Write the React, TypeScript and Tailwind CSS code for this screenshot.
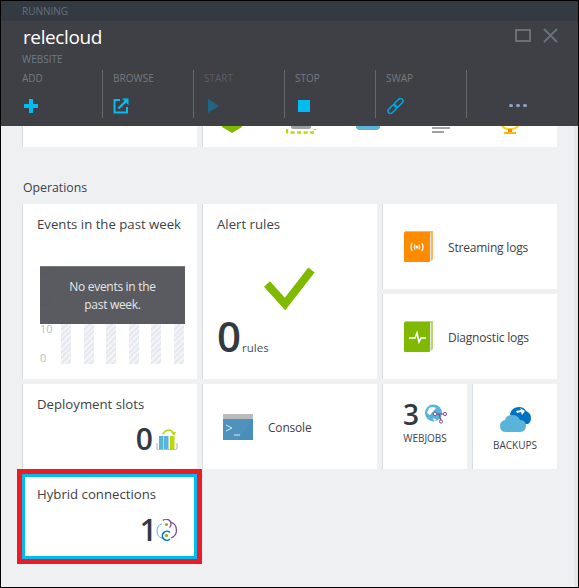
const font = "font-['Open_Sans',sans-serif]";

function Command({ label, dim, first, last, children }: { label?: string; dim?: boolean; first?: boolean; last?: boolean; children: React.ReactNode }) {
  return (
    <div className={`flex h-[48px] flex-col ${first ? "w-[81px]" : "w-[91px] pl-[10px]"} ${last ? "" : "border-r border-[#66686c]"}`}>
      <div className={`h-[26px] text-[10px] leading-[16px] ${dim ? "text-[#5b5c60]" : "text-[#77797d]"}`}>{label}</div>
      <div className="flex h-[20px] items-center">{children}</div>
    </div>
  );
}

function BookIcon({ color, light, children }: { color: string; light: string; children: React.ReactNode }) {
  return (
    <svg width="29" height="31" viewBox="0 0 29 31" className="shrink-0">
      <path d="M1 0h28v28l-2 2V2H1z" fill={light} />
      <path d="M26 2h1v28h-1z" fill="#e8e8e8" />
      <rect x="0" y="1" width="26" height="30" rx="1" fill={color} />
      {children}
    </svg>
  );
}

function Title({ children }: { children: React.ReactNode }) {
  return <div className="whitespace-nowrap text-[13.2px] leading-[20px] text-[#3d4148]">{children}</div>;
}

function Label({ children }: { children: React.ReactNode }) {
  return <span className="pt-[3px] text-[12px] tracking-[-0.2px] text-[#3d4148]">{children}</span>;
}

function Card({ className = "", children }: { className?: string; children?: React.ReactNode }) {
  return <div className={`border-l border-[#d9dce0] bg-white ${className}`}>{children}</div>;
}

function Chart() {
  const bars = [0, 1, 2, 3, 4, 5];
  return (
    <div className="relative mt-[30px] h-[102px] w-[148px] text-[11px] text-[#b9bcc0]">
      <div className="flex h-full">
        <div className="flex w-[24px] flex-col justify-between pl-[3px] leading-[16px]">
          <span>30</span>
          <span>20</span>
          <span>10</span>
          <span>0</span>
        </div>
        <div className="flex flex-1 items-end justify-between pb-[2px] pr-[1px]">
          {bars.map((b) => (
            <div
              key={b}
              className="h-[58px] w-[10px] bg-[repeating-linear-gradient(135deg,#e7e9f0_0px,#e7e9f0_2px,#f3f4f7_2px,#f3f4f7_4px)]"
            />
          ))}
        </div>
      </div>
      <div className="absolute left-[3px] top-[2px] flex h-[58px] w-[145px] items-center justify-center border-t border-[#77797d] bg-[#505257]/95 text-center text-[12px] leading-[18px] tracking-[-0.3px] text-[#e6e6e6]">
        <span>
          No events in the
          <br />
          past week.
        </span>
      </div>
    </div>
  );
}

export default function App() {
  return (
    <div className={`flex h-[588px] w-[579px] flex-col overflow-hidden border border-black bg-[#eff0f2] ${font}`}>
      <div className="h-[20px] bg-[#333a42] pl-[21px] text-[10px] leading-[20px] text-[#66707b]">RUNNING</div>
      <div className="h-[105px] bg-[#3f4045] pl-[21px] pr-[20px]">
        <div className="flex h-[49px] justify-between">
          <div>
            <div className="pl-[1px] pt-[3px] text-[19px] leading-[27px] tracking-[-0.4px] text-white">relecloud</div>
            <div className="text-[10px] leading-[16px] text-[#6f7a88]">WEBSITE</div>
          </div>
          <div className="flex items-start gap-[12px] pt-[7px]">
            <svg width="16" height="14" viewBox="0 0 16 14" className="mt-[1px]">
              <rect x="1" y="1" width="14" height="11" fill="none" stroke="#6a7077" strokeWidth="2" />
            </svg>
            <svg width="15" height="15" viewBox="0 0 15 15">
              <path d="M1 1l13 13M14 1L1 14" fill="none" stroke="#6a7077" strokeWidth="2" />
            </svg>
          </div>
        </div>
        <div className="flex">
          <Command label="ADD" first>
            <svg width="16" height="16" viewBox="0 0 16 16" className="ml-[1px]">
              <path d="M8 1v14M1 8h14" fill="none" stroke="#00bcf2" strokeWidth="4" />
            </svg>
          </Command>
          <Command label="BROWSE">
            <svg width="16" height="16" viewBox="0 0 16 16">
              <path d="M7 2H1.500v12.500H14V9" fill="none" stroke="#00bcf2" strokeWidth="2" />
              <path d="M5.500 10.500L13 3" fill="none" stroke="#00bcf2" strokeWidth="2.400" />
              <path d="M9 0.500h6.500V7z" fill="#00bcf2" />
            </svg>
          </Command>
          <Command label="START" dim>
            <svg width="12" height="14" viewBox="0 0 12 14" className="ml-[4px]">
              <path d="M0 0l11 7-11 7z" fill="#1f6685" />
            </svg>
          </Command>
          <Command label="STOP">
            <div className="ml-[3px] h-[12px] w-[12px] bg-[#00bcf2]" />
          </Command>
          <Command label="SWAP">
            <svg width="17" height="16" viewBox="0 0 17 16" className="ml-[1px]">
              <g fill="none" stroke="#00a8e0" strokeWidth="1.500" transform="rotate(-45 8.500 8)">
                <rect x="-1" y="5.500" width="10" height="5" rx="2.500" />
                <rect x="8" y="5.500" width="10" height="5" rx="2.500" />
              </g>
            </svg>
          </Command>
          <Command last>
            <div className="ml-[32px] flex gap-[3px] pb-[1px]">
              <div className="h-[3px] w-[4px] rounded-full bg-[#8aa4c8]" />
              <div className="h-[3px] w-[4px] rounded-full bg-[#8aa4c8]" />
              <div className="h-[3px] w-[4px] rounded-full bg-[#8aa4c8]" />
            </div>
          </Command>
        </div>
      </div>

      <div className="flex flex-1">
        <div className="flex-1 pl-[21px]">
          <div className="flex h-[21px] gap-[5px]">
            <Card className="w-[175px]" />
            <Card className="flex w-[355px] items-start overflow-hidden">
              <svg width="20" height="7" viewBox="0 0 20 7" className="ml-[19px] shrink-0">
                <path d="M0 0h20v1L10 7 0 1z" fill="#7fba00" />
              </svg>
              <svg width="30" height="8" viewBox="0 0 30 8" className="ml-[44px] shrink-0">
                <path d="M5 0h20v1q0 2-2 2H7q-2 0-2-2z" fill="#a0a1a2" />
                <path d="M1 3v2.500q0 1 1 1h26q1 0 1-1V3" fill="none" stroke="#bad80a" strokeWidth="2.500" strokeDasharray="4 2.500" />
              </svg>
              <div className="ml-[40px] h-[4px] w-[24px] shrink-0 rounded-b-[4px] bg-[#59b4d9]" />
              <svg width="19" height="7" viewBox="0 0 19 7" className="ml-[52px] shrink-0">
                <path d="M0 2h18M0 6h12" fill="none" stroke="#444" strokeWidth="1.200" />
              </svg>
              <svg width="18" height="8" viewBox="0 0 18 8" className="ml-[50px] shrink-0">
                <path d="M1 0q2 3 7 3h2q5 0 7-3" fill="none" stroke="#fcd116" strokeWidth="2" />
                <rect x="7" y="3" width="4" height="3" fill="#ff8c00" />
                <rect x="3" y="6" width="12" height="2" fill="#fcb714" />
              </svg>
            </Card>
          </div>

          <div className="flex h-[57px] items-center pl-[1px] pt-[24px] text-[12.3px] leading-[18px] text-[#3d4148]">Operations</div>

          <div className="grid grid-cols-[175px_175px_175px] grid-rows-[85px_85px_85px_85px] gap-[5px]">
            <Card className="row-span-2 px-[14px] pt-[10px]">
              <Title>Events in the past week</Title>
              <Chart />
            </Card>
            <Card className="row-span-2 flex flex-col px-[14px] pt-[10px]">
              <Title>Alert rules</Title>
              <svg width="52" height="46" viewBox="0 0 52 46" className="ml-[47px] mt-[33px] shrink-0">
                <path d="M3 17l18 20L47.500 3" fill="none" stroke="#7fba00" strokeWidth="8" />
              </svg>
              <div className="mt-[-3px] flex items-end">
                <span className="text-[42px] font-semibold leading-[52px] text-[#333a42]">0</span>
                <span className="pb-[5px] pl-[1px] text-[11.500px] leading-[18px] text-[#4a4f58]">rules</span>
              </div>
            </Card>
            <Card className="flex items-center gap-[15px] pl-[21px]">
              <BookIcon color="#ff8c00" light="#ffb45c">
                <path d="M8 12q-2 4 0 8M11 13.500q-1.500 2.500 0 5M18 12q2 4 0 8M15 13.500q1.500 2.500 0 5" fill="none" stroke="#fff" strokeWidth="1.200" />
                <circle cx="13" cy="16" r="1.500" fill="#fff" />
              </BookIcon>
              <Label>Streaming logs</Label>
            </Card>
            <Card className="col-start-3 flex items-center gap-[15px] pl-[21px]">
              <BookIcon color="#7fba00" light="#b4d96a">
                <path d="M5 17h6l2-5 2 9 2-4h5" fill="none" stroke="#fff" strokeWidth="1.600" />
              </BookIcon>
              <Label>Diagnostic logs</Label>
            </Card>
            <Card className="px-[14px] pt-[10px]">
              <Title>Deployment slots</Title>
              <div className="mt-[5px] flex items-center justify-end gap-[3px] pr-[5px]">
                <span className="text-[30px] font-semibold leading-[40px] text-[#333a42]">0</span>
                <svg width="22" height="23" viewBox="0 0 22 23" className="shrink-0">
                  <path d="M6.500 6Q12 -1 17 4" fill="none" stroke="#bad80a" strokeWidth="1.500" />
                  <path d="M15 4h5l-2 4z" fill="#bad80a" />
                  <rect x="3" y="8" width="4.500" height="13" fill="#59b4d9" />
                  <rect x="8" y="8" width="4.500" height="13" fill="#59b4d9" />
                  <rect x="14" y="8" width="4.500" height="13" fill="#bad80a" />
                  <path d="M1 15v5q0 1.500 1.500 1.500h17q1.500 0 1.500-1.500v-5" fill="none" stroke="#b8bbbe" strokeWidth="1.200" />
                </svg>
              </div>
            </Card>
            <Card className="flex items-center gap-[15px] pl-[20px]">
              <svg width="30" height="26" viewBox="0 0 30 26" className="shrink-0">
                <rect width="30" height="26" fill="#4a8fba" />
                <path d="M0 0h30v5H0z" fill="#b8babc" />
                <path d="M30 5v0L14 26H0V5z" fill="#4f93bd" />
                <path d="M3 11l6 3-6 3" fill="none" stroke="#dbe9f2" strokeWidth="1" />
                <path d="M11 21h6" stroke="#dbe9f2" strokeWidth="1" />
              </svg>
              <Label>Console</Label>
            </Card>
            <div className="grid grid-cols-[85px_85px] gap-[5px]">
              <Card className="flex flex-col items-center pt-[14px]">
                <div className="flex items-center gap-[6px]">
                  <span className="text-[28px] font-semibold leading-[32px] text-[#333a42]">3</span>
                  <svg width="22" height="20" viewBox="0 0 22 20" className="shrink-0">
                    <circle cx="8.500" cy="9" r="8.500" fill="#59b4d9" />
                    <path d="M4 4q4-2 7 0l-6 7-3-2zM8 14l4 2-3 1z" fill="#fff" />
                    <path d="M10 10h10M14 10l2 7" stroke="#804998" strokeWidth="1.200" fill="none" />
                    <circle cx="10" cy="10" r="1.800" fill="#fff" stroke="#804998" />
                    <circle cx="20" cy="10" r="1.600" fill="#fff" stroke="#804998" />
                    <circle cx="16" cy="17.500" r="1.600" fill="#fff" stroke="#804998" />
                  </svg>
                </div>
                <span className="text-[10px] leading-[16px] text-[#3d4148]">WEBJOBS</span>
              </Card>
              <Card className="flex flex-col items-center pt-[22px]">
                <svg width="31" height="26" viewBox="0 0 31 26" className="shrink-0">
                  <path d="M10 8q2-7 9-7 5 0 7 4 5 2 5 7 0 4-3 6H14z" fill="#0072c6" />
                  <path d="M16 5l5-1-1-2 5 3-3 4-1-3-4 1z" fill="#fff" />
                  <path d="M6 26q-6 0-6-6 0-5 5-6 1-5 7-5 6 0 8 5 5 0 6 5 0 7-6 7z" fill="#59b4d9" />
                </svg>
                <span className="mt-[5px] text-[10px] leading-[16px] text-[#3d4148]">BACKUPS</span>
              </Card>
            </div>
            <div className="border-[3px] border-[#00bcf2] bg-white pl-[12px] pt-[7px] outline outline-[5px] outline-[#ed1c24]">
              <Title>Hybrid connections</Title>
              <div className="mt-[6px] flex items-center justify-end pr-[16px]">
                <span className="mr-[-1px] text-[30px] font-semibold leading-[40px] text-[#333a42]">1</span>
                <svg width="22" height="22" viewBox="0 0 22 22" className="shrink-0">
                  <path d="M7 1.500A4.500 4.500 0 0 1 13.500 8.500" fill="none" stroke="#804998" strokeWidth="1.300" />
                  <path d="M14.500 3Q20.500 5 20.500 11Q20.500 17 15 19" fill="none" stroke="#804998" strokeWidth="1.300" />
                  <path d="M6 5Q1 6 1 12Q1 18 6 19" fill="none" stroke="#59b4d9" strokeWidth="1" />
                  <path d="M14 13.500A4.500 4.500 0 1 0 14 20" fill="none" stroke="#0072c6" strokeWidth="1.600" />
                  <circle cx="10.500" cy="5.500" r="1.600" fill="#7fba00" />
                  <circle cx="10.500" cy="16.500" r="1.600" fill="#7fba00" />
                </svg>
              </div>
            </div>
          </div>
        </div>
        <div className="w-[4px] bg-[#e4e6e9]" />
      </div>
    </div>
  );
}
